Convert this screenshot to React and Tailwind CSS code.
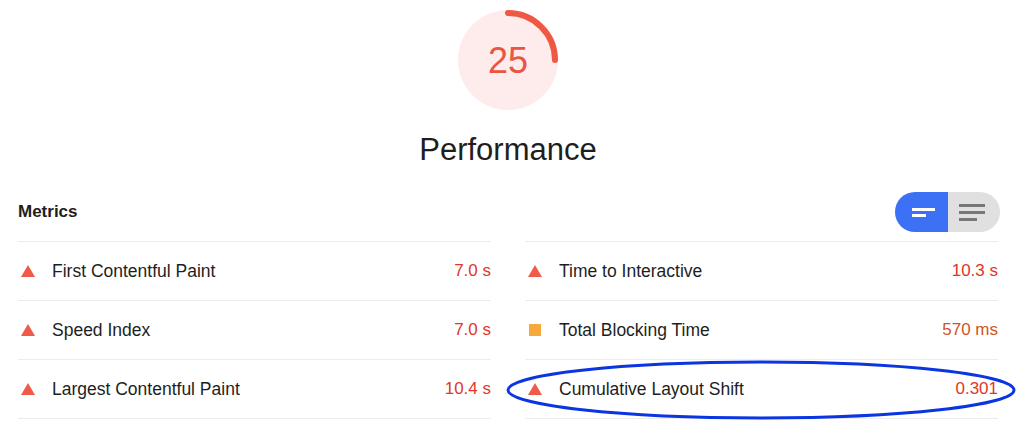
const metricsLeft = [
  { name: "First Contentful Paint", value: "7.0 s", kind: "fail" },
  { name: "Speed Index", value: "7.0 s", kind: "fail" },
  { name: "Largest Contentful Paint", value: "10.4 s", kind: "fail" },
];

const metricsRight = [
  { name: "Time to Interactive", value: "10.3 s", kind: "fail" },
  { name: "Total Blocking Time", value: "570 ms", kind: "average" },
  { name: "Cumulative Layout Shift", value: "0.301", kind: "fail", circled: true },
];

function Gauge({ score }) {
  const r = 47;
  const c = 2 * Math.PI * r;
  return (
    <div className="relative w-[100px] h-[100px] rounded-full bg-[#fdeceb] flex items-center justify-center">
      <svg className="absolute inset-0" width="100" height="100" viewBox="0 0 100 100">
        <circle
          cx="50"
          cy="50"
          r={r}
          fill="none"
          stroke="#ef5843"
          strokeWidth="6"
          strokeLinecap="round"
          strokeDasharray={`${(c * score) / 100} ${c}`}
          transform="rotate(-90 50 50)"
        />
      </svg>
      <span className="relative text-[36px] leading-none text-[#eb5443] pt-[1px]">{score}</span>
    </div>
  );
}

function Icon({ kind }) {
  if (kind === "average") {
    return <span className="block w-[12px] h-[12px] bg-[#f7a93b] ml-[1px]" />;
  }
  return (
    <svg width="14" height="12" viewBox="0 0 14 12">
      <polygon points="7,0 14,12 0,12" fill="#f05a48" />
    </svg>
  );
}

function MetricRow({ metric }) {
  const valueColor = metric.kind === "average" ? "text-[#cf5527]" : "text-[#e0362a]";
  return (
    <div className="relative h-[59px] border-t border-[#ececec] flex items-center pl-[3px]">
      <div className="w-[31px] flex items-center">
        <Icon kind={metric.kind} />
      </div>
      <span className="flex-1 text-[17.5px] text-[#1e1e1e]">{metric.name}</span>
      <span className={`text-[17px] ${valueColor}`}>{metric.value}</span>
      {metric.circled && (
        <svg
          className="absolute left-[-19px] top-[1px] overflow-visible pointer-events-none"
          width="510"
          height="58"
          viewBox="0 0 510 58"
        >
          <ellipse cx="255" cy="29" rx="253" ry="28" fill="none" stroke="#0b35e0" strokeWidth="3" />
        </svg>
      )}
    </div>
  );
}

export default function App() {
  return (
    <div
      className="w-[1024px] h-[434px] bg-white overflow-hidden"
      style={{ fontFamily: '"Liberation Sans", Arial, sans-serif' }}
    >
      <div className="w-[1016px] flex flex-col items-center pt-[10px]">
        <Gauge score={25} />
        <h1 className="mt-[22px] text-[31px] leading-[36px] text-[#1e1e1e]">Performance</h1>
        <div className="w-[980px] mt-[22px]">
          <div className="flex items-center justify-between pt-[2px] pb-[9px]">
            <h2 className="text-[17px] font-bold text-[#1e1e1e]">Metrics</h2>
            <div className="flex h-[40px] w-[105px] mr-[-2px] rounded-full overflow-hidden">
              <button className="w-[53px] bg-[#3c70f5] flex flex-col justify-center pl-[17px] gap-[3px]">
                <span className="block w-[23px] h-[3px] bg-white" />
                <span className="block w-[14px] h-[3px] bg-white" />
              </button>
              <button className="flex-1 bg-[#e0e0e0] flex flex-col justify-center pl-[11px] gap-[4px]">
                <span className="block w-[26px] h-[3px] bg-[#777777]" />
                <span className="block w-[26px] h-[3px] bg-[#777777]" />
                <span className="block w-[18px] h-[3px] bg-[#777777]" />
              </button>
            </div>
          </div>
          <div className="grid grid-cols-2 gap-x-[34px]">
            <div className="flex flex-col">
              {metricsLeft.map((m) => (
                <MetricRow key={m.name} metric={m} />
              ))}
              <div className="border-t border-[#ececec]" />
            </div>
            <div className="flex flex-col">
              {metricsRight.map((m) => (
                <MetricRow key={m.name} metric={m} />
              ))}
              <div className="border-t border-[#ececec]" />
            </div>
          </div>
        </div>
      </div>
    </div>
  );
}
